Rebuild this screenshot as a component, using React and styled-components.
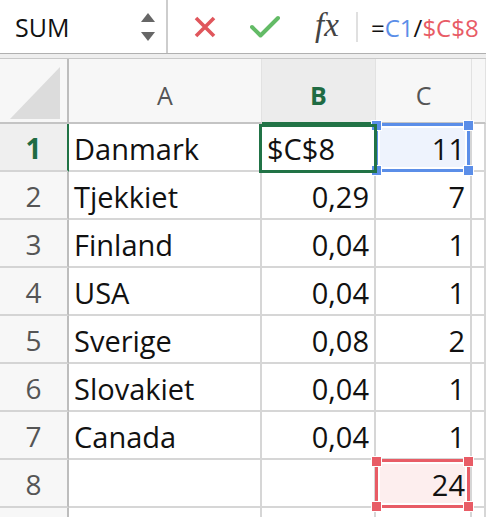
import styled, { createGlobalStyle, css } from 'styled-components';

const GlobalStyle = createGlobalStyle`
  html, body {
    margin: 0;
    padding: 0;
    background: #fff;
  }
  body {
    font-family: "Open Sans", Lato, sans-serif;
  }
`;

const Window = styled.div`
  width: 486px;
  height: 517px;
  overflow: hidden;
  background: #fff;
`;

const FormulaBar = styled.div`
  display: flex;
  align-items: stretch;
  height: 53px;
  background: #fff;
  border-bottom: 1px solid #b0b0b0;
`;

const NameBox = styled.div`
  display: flex;
  align-items: center;
  justify-content: space-between;
  width: 168px;
  padding: 0 10px 0 15px;
  box-sizing: border-box;
  border-right: 2px solid #cdcdcd;
`;

const NameText = styled.span`
  font-size: 25px;
  color: #111;
  padding-top: 1px;
`;

const Stepper = styled.svg`
  width: 16px;
  height: 34px;
`;

const Actions = styled.div`
  display: flex;
  align-items: center;
  padding-left: 8px;
`;

const IconButton = styled.div`
  display: flex;
  align-items: center;
  justify-content: center;
  width: ${p => p.$w || 58}px;
  height: 100%;
`;

const Fx = styled.span`
  font-family: "Liberation Serif", "DejaVu Serif", serif;
  font-style: italic;
  font-size: 33px;
  color: #444;
  padding: 0 0 2px 4px;
`;

const Divider = styled.div`
  align-self: center;
  width: 2px;
  height: 30px;
  background: #e0e0e0;
  margin: 0 13px 0 2px;
`;

const Formula = styled.div`
  display: flex;
  align-items: center;
  font-size: 24px;
  padding-top: 2px;
  white-space: nowrap;
`;

const Ref = styled.span`
  color: ${p => p.$color || '#111'};
`;

const Band = styled.div`
  height: 4px;
  background: #eeeeee;
  border-bottom: 1px solid #c8c8c8;
`;

const Sheet = styled.div`
  display: grid;
  grid-template-columns: 69px 193px 114px 96px 1fr;
  grid-auto-rows: 48px;
  grid-template-rows: 65px;
`;

const Corner = styled.div`
  display: flex;
  align-items: flex-end;
  justify-content: flex-end;
  padding: 0 7px 3px 0;
  background: #f7f7f7;
  border-right: 2px solid #bdbdbd;
  border-bottom: 2px solid #c4c4c4;
`;

const ColHeader = styled.div`
  display: flex;
  align-items: center;
  justify-content: center;
  padding-top: 8px;
  font-size: 25px;
  color: #555;
  background: ${p => (p.$active ? '#ececec' : '#f7f7f7')};
  border-right: 1px solid #e2e2e2;
  border-bottom: 2px solid ${p => (p.$active ? '#217346' : '#c4c4c4')};
  ${p =>
    p.$active &&
    css`
      color: #1f6b43;
      font-weight: 700;
    `}
`;

const RowHeader = styled.div`
  display: flex;
  align-items: center;
  justify-content: center;
  padding-top: 2px;
  font-size: 28px;
  color: #555;
  background: ${p => (p.$active ? '#efefef' : '#f7f7f7')};
  border-right: 2px solid ${p => (p.$active ? '#217346' : '#bdbdbd')};
  border-bottom: 2px solid #d4d4d4;
  ${p =>
    p.$active &&
    css`
      color: #1f6b43;
      font-weight: 700;
    `}
`;

const Cell = styled.div`
  position: relative;
  display: flex;
  align-items: center;
  justify-content: ${p => (p.$align === 'left' ? 'flex-start' : 'flex-end')};
  padding: 2px ${p => (p.$align === 'left' ? 0 : 5)}px 0 ${p => (p.$align === 'left' ? 5 : 0)}px;
  font-size: 29px;
  color: #111;
  white-space: nowrap;
  border-right: 2px solid #d6d6d6;
  border-bottom: 2px solid #d6d6d6;
`;

const CellText = styled.span`
  position: relative;
  z-index: 2;
`;

const ActiveBox = styled.div`
  position: absolute;
  top: 0;
  left: -3px;
  right: -3px;
  bottom: -3px;
  border: 3px solid #217346;
  z-index: 3;
`;

const RangeBox = styled.div`
  position: absolute;
  top: -1px;
  left: -1px;
  right: 0;
  bottom: -2px;
  border: 3px solid ${p => p.$color};
  background: ${p => p.$fill};
  box-shadow: inset 0 0 0 2px #fff;
  z-index: 1;
`;

const Handle = styled.div`
  position: absolute;
  width: 9px;
  height: 9px;
  background: ${p => p.$color};
  border: 1px solid #fff;
  ${p => (p.$top ? 'top: -6px;' : 'bottom: -7px;')}
  ${p => (p.$left ? 'left: -7px;' : 'right: -7px;')}
`;

const BLUE = '#5b8ee8';
const RED = '#e85c66';

const rows = [
  ['Danmark', '$C$8', '11'],
  ['Tjekkiet', '0,29', '7'],
  ['Finland', '0,04', '1'],
  ['USA', '0,04', '1'],
  ['Sverige', '0,08', '2'],
  ['Slovakiet', '0,04', '1'],
  ['Canada', '0,04', '1'],
  ['', '', '24'],
];

function Range({ color, fill }) {
  return (
    <RangeBox $color={color} $fill={fill}>
      <Handle $color={color} $top $left />
      <Handle $color={color} $top />
      <Handle $color={color} $left />
      <Handle $color={color} />
    </RangeBox>
  );
}

export default function App() {
  return (
    <Window>
      <GlobalStyle />
      <FormulaBar>
        <NameBox>
          <NameText>SUM</NameText>
          <Stepper viewBox="0 0 16 34">
            <path d="M8 3 L15 12 L1 12 Z" fill="#666" />
            <path d="M1 22 L15 22 L8 31 Z" fill="#666" />
          </Stepper>
        </NameBox>
        <Actions>
          <IconButton $w={58}>
            <svg width="24" height="24" viewBox="0 0 24 24">
              <path d="M3 3 L21 21 M21 3 L3 21" stroke="#e0565c" strokeWidth="3.6" strokeLinecap="butt" />
            </svg>
          </IconButton>
          <IconButton $w={62}>
            <svg width="30" height="24" viewBox="0 0 30 24">
              <path d="M2 12 L10.5 20.5 L28 3" stroke="#63bb66" strokeWidth="4" fill="none" strokeLinejoin="round" strokeLinecap="round" />
            </svg>
          </IconButton>
          <IconButton $w={58}>
            <Fx>fx</Fx>
          </IconButton>
        </Actions>
        <Divider />
        <Formula>
          <Ref>=</Ref>
          <Ref $color={BLUE}>C1</Ref>
          <Ref>/</Ref>
          <Ref $color={RED}>$C$8</Ref>
        </Formula>
      </FormulaBar>
      <Band />
      <Sheet>
        <Corner>
          <svg width="50" height="52" viewBox="0 0 50 52">
            <path d="M0 52 L50 0 L50 52 Z" fill="#dcdcdc" />
          </svg>
        </Corner>
        <ColHeader>A</ColHeader>
        <ColHeader $active>B</ColHeader>
        <ColHeader>C</ColHeader>
        <ColHeader />
        {rows.map((row, i) => (
          <RowCells key={i} index={i} row={row} />
        ))}
        <RowHeader />
        <Cell />
        <Cell />
        <Cell />
        <Cell />
      </Sheet>
    </Window>
  );
}

function RowCells({ index, row }) {
  const [a, b, c] = row;
  return (
    <>
      <RowHeader $active={index === 0}>{index + 1}</RowHeader>
      <Cell $align="left">
        <CellText>{a}</CellText>
      </Cell>
      <Cell $align={index === 0 ? 'left' : 'right'}>
        <CellText>{b}</CellText>
        {index === 0 && <ActiveBox />}
      </Cell>
      <Cell>
        <CellText>{c}</CellText>
        {index === 0 && <Range color={BLUE} fill="#eef3fd" />}
        {index === 7 && <Range color={RED} fill="#fdeeee" />}
      </Cell>
      <Cell />
    </>
  );
}
